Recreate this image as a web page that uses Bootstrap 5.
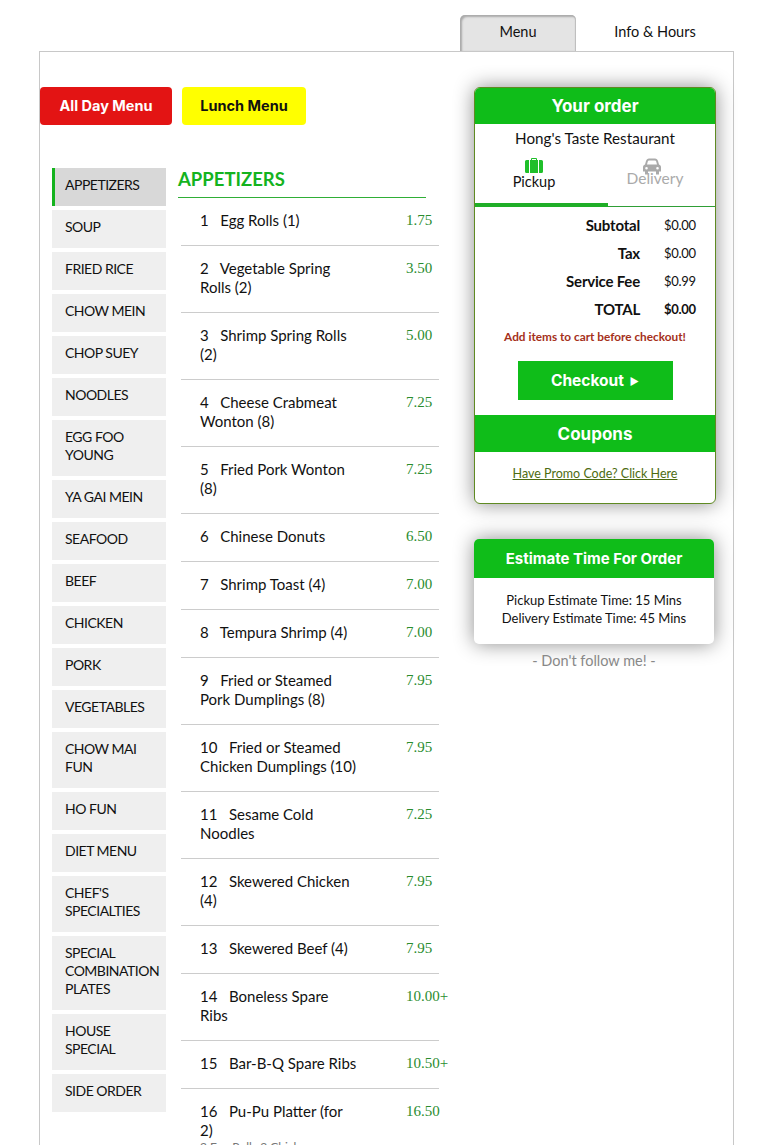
<!DOCTYPE html>
<html lang="en">
<head>
  <meta charset="UTF-8" />
  <meta name="viewport" content="width=device-width, initial-scale=1.0" />
  <title>Hong's Taste Restaurant</title>
  <link href="https://cdn.jsdelivr.net/npm/bootstrap@5.3.2/dist/css/bootstrap.min.css" rel="stylesheet">
  <style>
    html, body { height: 1145px; overflow: hidden; }
    body { font-family: Lato, "Open Sans", sans-serif; font-size: 15px; line-height: 19px; color: #111; background: #fff; }
    .page-tabs { height: 51px; padding: 15px 0 0 460px; }
    .page-tab { width: 116px; height: 36px; line-height: 33px; text-align: center; color: #111; text-decoration: none; font-size: 14.5px; }
    .page-tab.active-tab { background: #e4e4e4; border-radius: 5px 5px 0 0; box-shadow: inset 2px 2px 2px #aaa, inset -1px 0 1px #bbb; line-height: 34px; }
    .page-tab + .page-tab { margin-left: 21px; }
    .frame { width: 695px; height: 1200px; margin-left: 39px; border: 1px solid #c8c8c8; border-bottom: 0; padding-top: 35px; }
    .main-col { width: 433px; flex: none; }
    .menu-btn { height: 38px; padding: 0; font: 700 14.5px/36px Inter, sans-serif; border: 0; border-radius: 4px; }
    .all-day { width: 132px; background: #e31414; color: #fff; }
    .lunch { width: 124px; background: #ffff00; color: #111; margin-left: 10px; }
    .cat-side { width: 114px; margin: 43px 12px 0 12px; }
    .cat-link { background: #efefef; color: #111; padding: 8px 8px 12px 13px; line-height: 18px; font-size: 14px; letter-spacing: -.5px; margin-bottom: 4px; text-decoration: none; display: block; }
    .cat-link.cat-active { background: #d8d8d8; border-left: 3px solid #14b31e; padding-left: 10px; }
    .items { width: 270px; margin-top: 43px; flex: none; }
    .items-title { width: 248px; height: 30px; margin: 0; font: 700 18.5px/22px Lato, sans-serif; color: #14b31e; border-bottom: 1px solid #2fae36; }
    .item-row { width: 258px; margin-left: 3px; padding: 13px 0 15px 19px; border-bottom: 1px solid #ccc; }
    .item-name { width: 157px; flex: none; margin-right: 49px; }
    .item-price { font-family: "Liberation Serif", serif; color: #2a8c2e; white-space: nowrap; }
    .item-sub { font-size: 12px; line-height: 14px; color: #777; }
    .order-col { width: 242px; margin-left: 1px; }
    .order-card { border: 1px solid #5f8a22; border-radius: 6px; box-shadow: 0 0 20px rgba(0,0,0,.45); overflow: hidden; height: 417px; }
    .green-head { background: #0fbd19; color: #fff; font: 700 17px/38px Inter, sans-serif; height: 37px; text-align: center; }
    .order-card > .green-head:first-child { margin: -1px -1px 0; }
    .rest-name { margin-top: 4px; text-align: center; font-size: 15.2px; line-height: 20px; }
    .mode-tabs { height: 55px; border-bottom: 1px solid #2f9e36; margin-top: 4px; }
    .mode { width: 133px; text-align: center; height: 55px; padding-top: 6px; }
    .mode.on { border-bottom: 4px solid #1fae27; padding-right: 15px; font-size: 14.5px; }
    .mode.on div { margin-top: -1px; }
    .mode.off { flex: 1; color: #aaa; font-size: 15.5px; padding-right: 13px; }
    .mode svg { display: block; margin: 0 auto; }
    .mode.off svg { margin: 0 0 -6px 35px; }
    .sum-wrap { padding-top: 4px; }
    .sum-row { height: 28px; line-height: 28px; font-size: 13px; letter-spacing: -.3px; }
    .sum-label { width: 165px; text-align: right; font-weight: 700; font-size: 15px; letter-spacing: -.2px; }
    .sum-val { margin-left: 24px; }
    .warn { color: #a5301a; font-size: 11.8px; font-weight: 700; text-align: center; line-height: 28px; }
    .checkout { display: block; width: 155px; height: 39px; margin: 10px auto 15px; background: #0fbd19; color: #fff; border: 0; border-radius: 0; font: 700 15.5px/37px Inter, sans-serif; padding: 0; }
    .checkout-arrow { font-size: 10px; vertical-align: 1px; margin-left: 2px; }
    .promo { display: block; text-align: center; color: #4d6b12; font-size: 12.5px; margin-top: 12px; }
    .est-card { width: 240px; margin-top: 35px; border-radius: 5px; box-shadow: 0 0 20px rgba(0,0,0,.45); overflow: hidden; }
    .est-card .green-head { font-size: 15px; line-height: 39px; height: 39px; }
    .est-body { text-align: center; font-size: 13px; line-height: 18px; padding: 13px 0 17px; }
    .no-follow { width: 240px; margin-top: 7px; text-align: center; color: #888; font-size: 14.5px; }
  </style>
</head>
<body>
  <div class="page-tabs d-flex">
    <a class="page-tab active-tab" href="#">Menu</a>
    <a class="page-tab" href="#">Info &amp; Hours</a>
  </div>

  <div class="frame d-flex">
    <div class="main-col">
      <div class="d-flex">
        <button class="btn menu-btn all-day">All Day Menu</button>
        <button class="btn menu-btn lunch">Lunch Menu</button>
      </div>
      <div class="d-flex">
        <div class="cat-side flex-shrink-0" id="cats"></div>
        <div class="items">
          <h5 class="items-title">APPETIZERS</h5>
          <div id="itemList"></div>
        </div>
      </div>
    </div>

    <div class="order-col">
      <div class="order-card bg-white">
        <div class="green-head">Your order</div>
        <div class="rest-name">Hong's Taste Restaurant</div>
        <div class="mode-tabs d-flex">
          <div class="mode on">
            <svg width="18" height="15" viewBox="0 0 18 15"><path fill="#1fbf2a" d="M6 2V1a1 1 0 0 1 1-1h4a1 1 0 0 1 1 1v1h1v13H5V2zm1 0h4V1H7zM1.500 2H4v13H1.500A1.500 1.500 0 0 1 0 13.500v-10A1.500 1.500 0 0 1 1.500 2zM14 2h2.500A1.500 1.500 0 0 1 18 3.500v10a1.500 1.500 0 0 1-1.500 1.500H14z"/></svg>
            <div>Pickup</div>
          </div>
          <div class="mode off">
            <svg width="18" height="17" viewBox="0 0 18 16"><path fill="#aaa" d="M3 2.500C3.500 1 4.500 0 6 0h6c1.500 0 2.500 1 3 2.500L16 6c1.200.4 2 1.300 2 2.500V13h-2v3h-3v-3H5v3H2v-3H0V8.500C0 7.300.8 6.400 2 6zM4 6h10l-.8-3c-.2-.7-.7-1-1.200-1H6c-.5 0-1 .3-1.200 1zm-.5 2.500a1.300 1.300 0 1 0 0 2.600 1.300 1.300 0 0 0 0-2.600zm11 0a1.300 1.300 0 1 0 0 2.600 1.300 1.300 0 0 0 0-2.600z"/></svg>
            <div>Delivery</div>
          </div>
        </div>
        <div class="sum-wrap">
          <div class="sum-row d-flex"><span class="sum-label">Subtotal</span><span class="sum-val">$0.00</span></div>
          <div class="sum-row d-flex"><span class="sum-label">Tax</span><span class="sum-val">$0.00</span></div>
          <div class="sum-row d-flex"><span class="sum-label">Service Fee</span><span class="sum-val">$0.99</span></div>
          <div class="sum-row d-flex"><span class="sum-label">TOTAL</span><span class="sum-val fw-bold">$0.00</span></div>
        </div>
        <div class="warn">Add items to cart before checkout!</div>
        <button class="btn checkout">Checkout <span class="checkout-arrow">&#9654;&#xFE0E;</span></button>
        <div class="green-head">Coupons</div>
        <a class="promo" href="#">Have Promo Code? Click Here</a>
      </div>

      <div class="est-card bg-white">
        <div class="green-head">Estimate Time For Order</div>
        <div class="est-body">Pickup Estimate Time: 15 Mins<br>Delivery Estimate Time: 45 Mins</div>
      </div>
      <div class="no-follow">- Don't follow me! -</div>
    </div>
  </div>

  <script>
    const cats = ['APPETIZERS', 'SOUP', 'FRIED RICE', 'CHOW MEIN', 'CHOP SUEY', 'NOODLES', 'EGG FOO YOUNG', 'YA GAI MEIN', 'SEAFOOD', 'BEEF', 'CHICKEN', 'PORK', 'VEGETABLES', 'CHOW MAI FUN', 'HO FUN', 'DIET MENU', "CHEF'S SPECIALTIES", 'SPECIAL COMBINATION PLATES', 'HOUSE SPECIAL', 'SIDE ORDER'];
    const items = [
      ['Egg Rolls (1)', '1.75'], ['Vegetable Spring Rolls (2)', '3.50'], ['Shrimp Spring Rolls (2)', '5.00'],
      ['Cheese Crabmeat Wonton (8)', '7.25'], ['Fried Pork Wonton (8)', '7.25'], ['Chinese Donuts', '6.50'],
      ['Shrimp Toast (4)', '7.00'], ['Tempura Shrimp (4)', '7.00'], ['Fried or Steamed Pork Dumplings (8)', '7.95'],
      ['Fried or Steamed Chicken Dumplings (10)', '7.95'], ['Sesame Cold Noodles', '7.25'], ['Skewered Chicken (4)', '7.95'],
      ['Skewered Beef (4)', '7.95'], ['Boneless Spare Ribs', '10.00+'], ['Bar-B-Q Spare Ribs', '10.50+'],
      ['Pu-Pu Platter (for 2)', '16.50', '2 Egg Rolls 2 Chicken']
    ];
    document.getElementById('cats').innerHTML = cats.map((c, i) =>
      `<a href="#" class="cat-link${i === 0 ? ' cat-active' : ''}">${c}</a>`).join('');
    document.getElementById('itemList').innerHTML = items.map((it, i) => `
      <div class="item-row d-flex">
        <div class="item-name">${i + 1}&nbsp;&nbsp; ${it[0]}${it[2] ? `<div class="item-sub">${it[2]}</div>` : ''}</div>
        <div class="item-price">${it[1]}</div>
      </div>`).join('');
  </script>
  <script src="https://cdn.jsdelivr.net/npm/bootstrap@5.3.2/dist/js/bootstrap.bundle.min.js"></script>
</body>
</html>
